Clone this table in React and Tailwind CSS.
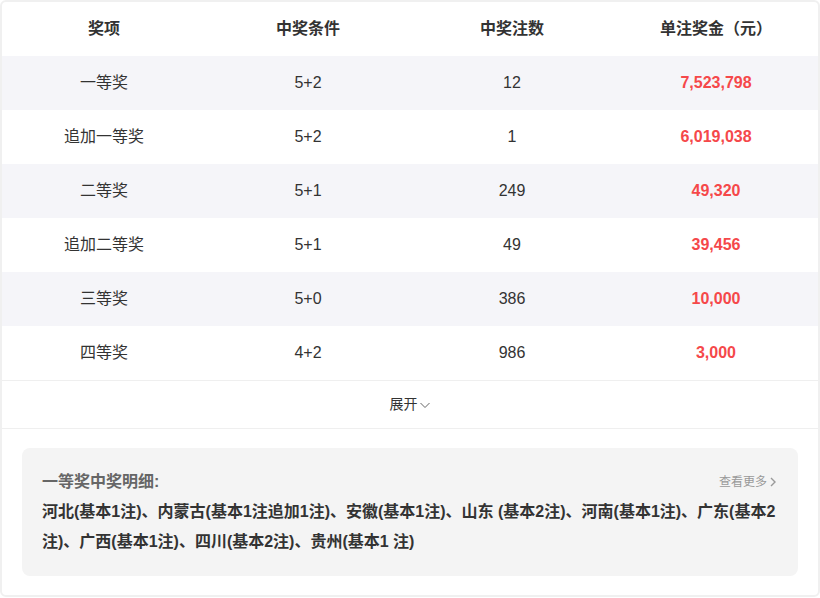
import React from 'react';

const rows = [
    { name: '一等奖', cond: '5+2', count: '12', prize: '7,523,798' },
    { name: '追加一等奖', cond: '5+2', count: '1', prize: '6,019,038' },
    { name: '二等奖', cond: '5+1', count: '249', prize: '49,320' },
    { name: '追加二等奖', cond: '5+1', count: '49', prize: '39,456' },
    { name: '三等奖', cond: '5+0', count: '386', prize: '10,000' },
    { name: '四等奖', cond: '4+2', count: '986', prize: '3,000' },
];

const App = () => {
    return (
        <div className="w-[820px] h-[598px] bg-white font-['Liberation_Sans','Noto_Sans_CJK_SC',sans-serif]">
            <div className="h-[597px] border-2 border-[#f0f0f0] rounded-[6px] flex flex-col">
                {/* Table header */}
                <div className="grid grid-cols-4 h-[54px] items-center text-center text-[16px] font-bold text-[#333]">
                    <div>奖项</div>
                    <div>中奖条件</div>
                    <div>中奖注数</div>
                    <div>单注奖金（元）</div>
                </div>

                {/* Rows */}
                {rows.map((r, i) => (
                    <div
                        key={r.name}
                        className={`grid grid-cols-4 h-[54px] items-center text-center text-[16px] text-[#333] ${i % 2 === 0 ? 'bg-[#f5f5f9]' : 'bg-white'}`}
                    >
                        <div>{r.name}</div>
                        <div>{r.cond}</div>
                        <div>{r.count}</div>
                        <div className="font-bold text-[#f5484a]">{r.prize}</div>
                    </div>
                ))}

                {/* Expand */}
                <div className="h-[49px] border-t border-b border-[#efefef] flex items-center justify-center text-[14px] text-[#333]">
                    展开
                    <svg width="12" height="12" viewBox="0 0 12 12" className="ml-[1px] mt-[1px]">
                        <path d="M1.5 4 L6 8.5 L10.5 4" fill="none" stroke="#666" strokeWidth="1" />
                    </svg>
                </div>

                {/* Detail */}
                <div className="px-[20px] pt-[19px]">
                    <div className="bg-[#f4f4f4] rounded-[8px] px-[20px] pt-[21px] pb-[19px]">
                        <div className="flex justify-between items-center h-[26px]">
                            <span className="text-[16px] font-bold text-[#666]">一等奖中奖明细:</span>
                            <span className="flex items-center text-[12px] text-[#999]">
                                查看更多
                                <svg width="10" height="12" viewBox="0 0 10 12" className="ml-[1px]">
                                    <path d="M3 2 L7 6 L3 10" fill="none" stroke="#999" strokeWidth="1.4" />
                                </svg>
                            </span>
                        </div>
                        <p className="text-[16px] font-bold text-[#333] leading-[30px] mt-[2px]">
                            河北(基本1注)、内蒙古(基本1注追加1注)、安徽(基本1注)、山东 (基本2注)、河南(基本1注)、广东(基本2注)、广西(基本1注)、四川(基本2注)、贵州(基本1 注)
                        </p>
                    </div>
                </div>
            </div>
        </div>
    );
};

export default App;
